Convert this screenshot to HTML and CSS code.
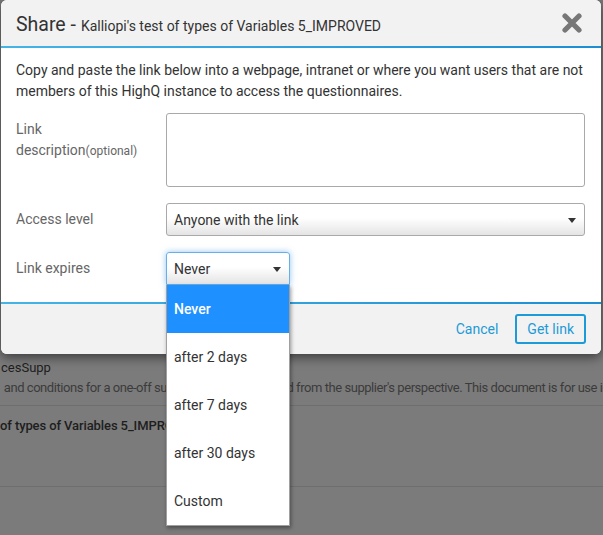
FILE: index.html
```html
<!DOCTYPE html>
<html>
<head>
<meta charset="utf-8">
<link rel="stylesheet" href="styles.css">
</head>
<body>
<div class="page">
  <div class="row">
    <div class="row-title">cesSupp</div>
    <div class="row-desc">&nbsp;and conditions for a one-off supply of services, drafted from the supplier's perspective. This document is for use in</div>
  </div>
  <div class="row row-tall">
    <div class="row-title strong">of types of Variables 5_IMPROVED</div>
  </div>
</div>

<div class="dialog">
  <div class="dlg-head">
    <div class="dlg-title"><span class="t-main">Share -</span> <span class="t-sub">Kalliopi's test of types of Variables 5_IMPROVED</span></div>
    <svg class="close" width="20" height="20" viewBox="0 0 20 20"><path d="M3 3 L17 17 M17 3 L3 17" stroke="#777" stroke-width="5.2" stroke-linecap="round"/></svg>
  </div>
  <div class="rule"></div>
  <div class="dlg-body">
    <p class="intro">Copy and paste the link below into a webpage, intranet or where you want users that are not members of this HighQ instance to access the questionnaires.</p>
    <div class="field">
      <div class="label">Link description<span class="opt">(optional)</span></div>
      <div class="textarea"></div>
    </div>
    <div class="field">
      <div class="label">Access level</div>
      <div class="select wide"><span>Anyone with the link</span><span class="caret"></span></div>
    </div>
    <div class="field">
      <div class="label">Link expires</div>
      <div class="select narrow focus"><span>Never</span><span class="caret"></span></div>
    </div>
  </div>
  <div class="rule"></div>
  <div class="dlg-foot">
    <span class="cancel">Cancel</span>
    <span class="btn">Get link</span>
  </div>
</div>

<ul class="menu">
  <li class="sel">Never</li>
  <li>after 2 days</li>
  <li>after 7 days</li>
  <li>after 30 days</li>
  <li>Custom</li>
</ul>
</body>
</html>
```

FILE: styles.css
```css
html, body {
  margin: 0;
  padding: 0;
}
body {
  width: 603px;
  height: 535px;
  overflow: hidden;
  background: #7b7b7b;
  font-family: Roboto, "Liberation Sans", sans-serif;
  position: relative;
}
.page {
  padding-top: 352px;
  overflow: hidden;
}
.row {
  padding: 7px 0 8px 1px;
  border-bottom: 1px solid #6e6e6e;
}
.row-tall {
  height: 69px;
  padding-top: 11px;
  padding-bottom: 0;
}
.row-title {
  font-size: 13px;
  line-height: 17px;
  color: #1e1e1e;
  white-space: nowrap;
}
.row-title.strong {
  font-weight: 500;
  margin-left: -1px;
  letter-spacing: -0.1px;
}
.row-desc {
  font-size: 13px;
  letter-spacing: -0.45px;
  line-height: 18px;
  margin-top: 3px;
  color: #3b3b3b;
  white-space: nowrap;
}

.dialog {
  position: absolute;
  left: 1px;
  top: 0;
  width: 600px;
  border-radius: 6px;
  background: #fff;
  box-shadow: 0 3px 12px rgba(0, 0, 0, 0.55);
  overflow: hidden;
}
.dlg-head {
  height: 46px;
  background: #f2f2f2;
  display: flex;
  align-items: center;
  justify-content: space-between;
  padding: 0 19px 0 15px;
}
.dlg-title {
  color: #333;
  white-space: nowrap;
  padding-top: 2px;
}
.t-main {
  font-size: 19.5px;
}
.t-sub {
  font-size: 14px;
  margin-left: 1px;
}
.close {
  display: block;
}
.rule {
  height: 2px;
  background: linear-gradient(to right, #45b4e5, #1b8fd2);
}
.dlg-body {
  padding: 12px 16px 17px 15px;
}
.intro {
  margin: 0 0 11px;
  font-size: 14px;
  line-height: 21px;
  color: #333;
}
.field {
  display: flex;
  align-items: flex-start;
  margin-bottom: 16px;
}
.field:last-child {
  margin-bottom: 0;
}
.label {
  width: 150px;
  flex: none;
  font-size: 14px;
  line-height: 21px;
  color: #666;
  padding-top: 6px;
  padding-right: 20px;
  box-sizing: border-box;
}
.opt {
  font-size: 12px;
}
.textarea {
  width: 420px;
  height: 74px;
  box-sizing: border-box;
  border: 1px solid #a9a9a9;
  border-radius: 3px;
  background: #fff;
}
.select {
  height: 33px;
  box-sizing: border-box;
  border: 1px solid #a9a9a9;
  border-radius: 3px;
  background: linear-gradient(to bottom, #ffffff 0%, #ffffff 45%, #e4e4e4 100%);
  display: flex;
  align-items: center;
  justify-content: space-between;
  padding: 0 8px 0 7px;
  font-size: 14px;
  color: #333;
}
.select.wide {
  width: 420px;
}
.select.narrow {
  width: 124px;
}
.select.focus {
  border-color: #66afe9;
  box-shadow: 0 0 6px rgba(102, 175, 233, 0.7);
  border-bottom-left-radius: 0;
  border-bottom-right-radius: 0;
}
.caret {
  width: 0;
  height: 0;
  border-left: 4.5px solid transparent;
  border-right: 4.5px solid transparent;
  border-top: 5px solid #333;
  margin-top: 1px;
}
.dlg-foot {
  height: 50px;
  background: #f2f2f2;
  display: flex;
  align-items: center;
  justify-content: flex-end;
  padding-right: 15px;
}
.cancel {
  font-size: 14px;
  color: #1d9ad8;
  margin-right: 17px;
}
.btn {
  height: 30px;
  box-sizing: border-box;
  border: 2px solid #1d9ad8;
  border-radius: 3px;
  padding: 0 10px;
  display: flex;
  align-items: center;
  font-size: 14px;
  color: #1d9ad8;
}

.menu {
  position: absolute;
  left: 166px;
  top: 285px;
  width: 124px;
  margin: 0;
  padding: 0;
  list-style: none;
  background: #fff;
  border: 1px solid #a0a0a0;
  border-top: 0;
  box-sizing: border-box;
  box-shadow: 1px 2px 4px rgba(0, 0, 0, 0.4);
}
.menu li {
  height: 48px;
  line-height: 48px;
  padding-left: 7px;
  font-size: 14px;
  color: #333;
}
.menu li.sel {
  background: #1e90ff;
  color: #fff;
  font-weight: 500;
}
```
